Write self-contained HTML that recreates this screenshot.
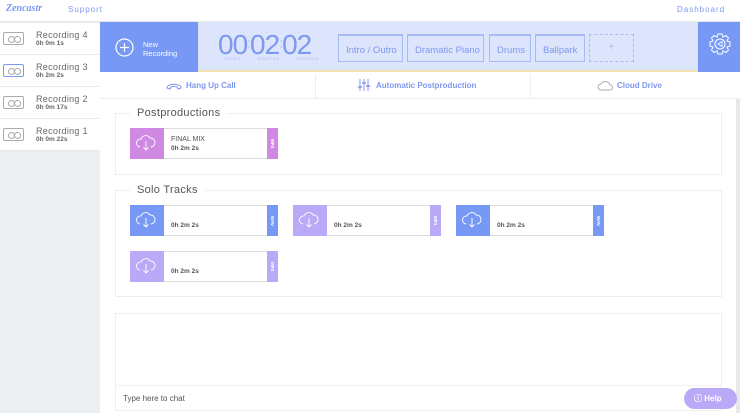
<!DOCTYPE html>
<html><head><style>
*{box-sizing:border-box;margin:0;padding:0}
body{width:740px;height:413px;overflow:hidden;font-family:"Liberation Sans",sans-serif;background:#fff;position:relative}
.a{position:absolute}
.top{left:0;top:0;width:740px;height:22px;background:#fff;border-bottom:1px solid #e6e6e6}
.side{left:0;top:22px;width:100px;height:391px;background:#eceff1}
.rec{position:absolute;left:0;width:100px;height:32px;background:#fff;border-bottom:1px solid #e8e8e8}
.rec .ic{position:absolute;left:3px;top:9px;width:21px;height:13px;border:1px solid #aaa;border-radius:2px}
.rec .ic:before,.rec .ic:after{content:"";position:absolute;top:3px;width:5px;height:5px;border:1px solid #aaa;border-radius:50%}
.rec .ic:before{left:4px}.rec .ic:after{left:10px}
.rec b{position:absolute;left:36px;top:7px;font-weight:normal;font-size:9px;color:#666;letter-spacing:.3px}
.rec i{position:absolute;left:36px;top:17px;font-style:normal;font-size:6.5px;font-weight:bold;color:#666}
.card{position:absolute;width:148px;height:31px;border:1px solid #ddd;background:#fff}
.card .l{position:absolute;left:-1px;top:-1px;width:34px;height:31px}
.card .r{position:absolute;right:-1px;top:-1px;width:11px;height:31px;color:#fff;font-size:4.5px;font-weight:bold;writing-mode:vertical-rl;display:flex;align-items:center;justify-content:center}
.card .t{position:absolute;left:40px;font-size:6.5px;color:#555}
.panel{position:absolute;left:115px;width:607px;border:1px solid #eee}
.leg{position:absolute;background:#fff;padding:0 7px;font-size:11px;color:#555;letter-spacing:.3px}
.tab{position:absolute;top:34px;height:28px;border:1px solid #a9bbf7;background:#dde5fc;color:#7d98ef;font-size:9.5px;padding:9px 0 0 7px;border-top:2px solid #a9bbf7;white-space:nowrap}
</style></head><body>
<div class="a top"></div>
<div class="a" style="left:6px;top:3px;font-family:'Liberation Serif',serif;font-style:italic;font-weight:bold;font-size:10px;color:#7d98ef">Zencastr</div>
<div class="a" style="left:68px;top:5px;font-size:8px;color:#7d98ef;letter-spacing:1px">Support</div>
<div class="a" style="left:677px;top:5px;font-size:8px;color:#7d98ef;letter-spacing:1px">Dashboard</div>
<div class="a side"></div>
<div class="rec" style="top:23px"><div class="ic"></div><b>Recording 4</b><i>0h 0m 1s</i></div>
<div class="rec" style="top:55px"><div class="ic" style="border-color:#7d98ef"></div><b>Recording 3</b><i>0h 2m 2s</i></div>
<div class="rec" style="top:87px"><div class="ic"></div><b>Recording 2</b><i>0h 0m 17s</i></div>
<div class="rec" style="top:119px"><div class="ic"></div><b>Recording 1</b><i>0h 0m 22s</i></div>
<div class="a" style="left:100px;top:22px;width:640px;height:50px;background:#dde5fc;border-bottom:2px solid #f3e3b0"></div>
<div class="a" style="left:100px;top:22px;width:98px;height:50px;background:#7799f5"></div>
<svg class="a" style="left:115px;top:38px" width="19" height="19"><circle cx="9.5" cy="9.5" r="8.5" fill="none" stroke="#fff" stroke-width="1.2"/><path d="M9.5 5v9M5 9.5h9" stroke="#fff" stroke-width="1.2"/></svg>
<div class="a" style="left:143px;top:40px;font-size:7.5px;color:#fff;line-height:9px">New<br>Recording</div>
<div class="a" style="left:218px;top:29px;font-size:28px;color:#7d98ef;letter-spacing:-1px">00<span style="font-size:14px;vertical-align:6px;color:#a9bbf7">:</span>02<span style="font-size:14px;vertical-align:6px;color:#a9bbf7">:</span>02</div>
<div class="a" style="left:224px;top:56px;font-size:4px;color:#a9bbf7;letter-spacing:.5px;word-spacing:15px">HOURS MINUTES SECONDS</div>
<div class="tab" style="left:338px;width:65px">Intro / Outro</div>
<div class="tab" style="left:407px;width:77px">Dramatic Piano</div>
<div class="tab" style="left:489px;width:42px">Drums</div>
<div class="tab" style="left:535px;width:50px">Ballpark</div>
<div class="a" style="left:589px;top:34px;width:45px;height:28px;border:1px dashed #a9bbf7;color:#a9bbf7;font-size:10px;text-align:center;line-height:26px">+</div>
<div class="a" style="left:698px;top:22px;width:42px;height:50px;background:#7799f5"></div>
<svg class="a" style="left:708px;top:32px" width="24" height="26" viewBox="0 0 24 24"><path d="M10 1h4l1 3 3-1.5 2.5 2.5L19 8l3 1v4l-3 1 1.5 3-2.5 2.5L15 18l-1 3h-4l-1-3-3 1.5L3.5 17 5 14l-3-1V9l3-1-1.5-3L6 2.5 9 4z" fill="none" stroke="#fff" stroke-width="1"/><circle cx="12" cy="11" r="5" fill="none" stroke="#fff"/><path d="M10 11l4-2.5v5z" fill="none" stroke="#fff" stroke-width=".8"/></svg>
<div class="a" style="left:100px;top:74px;width:640px;height:25px;background:#fff;border-bottom:1px solid #eee"></div>
<div class="a" style="left:315px;top:74px;width:1px;height:25px;background:#eee"></div>
<div class="a" style="left:530px;top:74px;width:1px;height:25px;background:#eee"></div>
<svg class="a" style="left:166px;top:81px" width="16" height="10"><path d="M1 7c0-5 14-5 14 0l-3 1-1-2c-2-1-4-1-6 0l-1 2z" fill="none" stroke="#7d98ef"/></svg>
<div class="a" style="left:186px;top:81px;font-size:8px;font-weight:bold;color:#7d98ef">Hang Up Call</div>
<svg class="a" style="left:358px;top:79px" width="12" height="12"><path d="M2 0v12M6 0v12M10 0v12" stroke="#7d98ef"/><path d="M0 8h4M4 4h4M8 7h4" stroke="#7d98ef" stroke-width="1.5"/></svg>
<div class="a" style="left:376px;top:81px;font-size:8px;font-weight:bold;color:#7d98ef">Automatic Postproduction</div>
<svg class="a" style="left:597px;top:79px" width="16" height="12"><path d="M4 11a3 3 0 0 1 0-6 5 5 0 0 1 9 1 2.5 2.5 0 0 1 0 5z" fill="none" stroke="#aab"/></svg>
<div class="a" style="left:617px;top:81px;font-size:8px;font-weight:bold;color:#7d98ef">Cloud Drive</div>
<div class="a" style="left:736px;top:99px;width:4px;height:314px;background:#e8e8e8"></div>
<div class="panel" style="top:113px;height:62px"></div>
<div class="leg" style="left:130px;top:107px">Postproductions</div>
<div class="panel" style="top:190px;height:107px"></div>
<div class="leg" style="left:130px;top:184px">Solo Tracks</div>
<div class="card" style="left:130px;top:128px"><div class="l" style="background:#cf89e3"></div><div class="t" style="top:7px;font-size:7px">FINAL MIX</div><div class="t" style="top:16px;font-weight:bold">0h 2m 2s</div><div class="r" style="background:#cf89e3">MP3</div></div>
<div class="card" style="left:130px;top:205px"><div class="l" style="background:#7799f5"></div><div class="t" style="top:16px;font-weight:bold">0h 2m 2s</div><div class="r" style="background:#7799f5">WAV</div></div>
<div class="card" style="left:293px;top:205px"><div class="l" style="background:#baa9f7"></div><div class="t" style="top:16px;font-weight:bold">0h 2m 2s</div><div class="r" style="background:#baa9f7">MP3</div></div>
<div class="card" style="left:456px;top:205px"><div class="l" style="background:#7799f5"></div><div class="t" style="top:16px;font-weight:bold">0h 2m 2s</div><div class="r" style="background:#7799f5">WAV</div></div>
<div class="card" style="left:130px;top:251px"><div class="l" style="background:#baa9f7"></div><div class="t" style="top:16px;font-weight:bold">0h 2m 2s</div><div class="r" style="background:#baa9f7">MP3</div></div>
<div class="panel" style="top:313px;height:98px"></div>
<div class="a" style="left:116px;top:385px;width:605px;height:1px;background:#f0f0f0"></div>
<div class="a" style="left:123px;top:394px;font-size:8px;color:#555">Type here to chat</div>
<div class="a" style="left:684px;top:388px;width:53px;height:21px;border-radius:11px;background:#baa9f7;color:#fff;font-size:8px;font-weight:bold;line-height:21px;padding-left:10px">&#9432; Help</div>
<svg class="a" style="left:0;top:0" width="740" height="413">
<g fill="none" stroke="#fff" stroke-width=".9">
<path id="c" d="M140 147a4 4 0 0 1 1-8 5 5 0 0 1 9-1 4 4 0 0 1 1 9M146 141v9m-2.5-2.5l2.5 2.5 2.5-2.5"/>
<use href="#c" y="77"/><use href="#c" x="163" y="77"/><use href="#c" x="326" y="77"/><use href="#c" y="123"/>
</g></svg>
</body></html>
